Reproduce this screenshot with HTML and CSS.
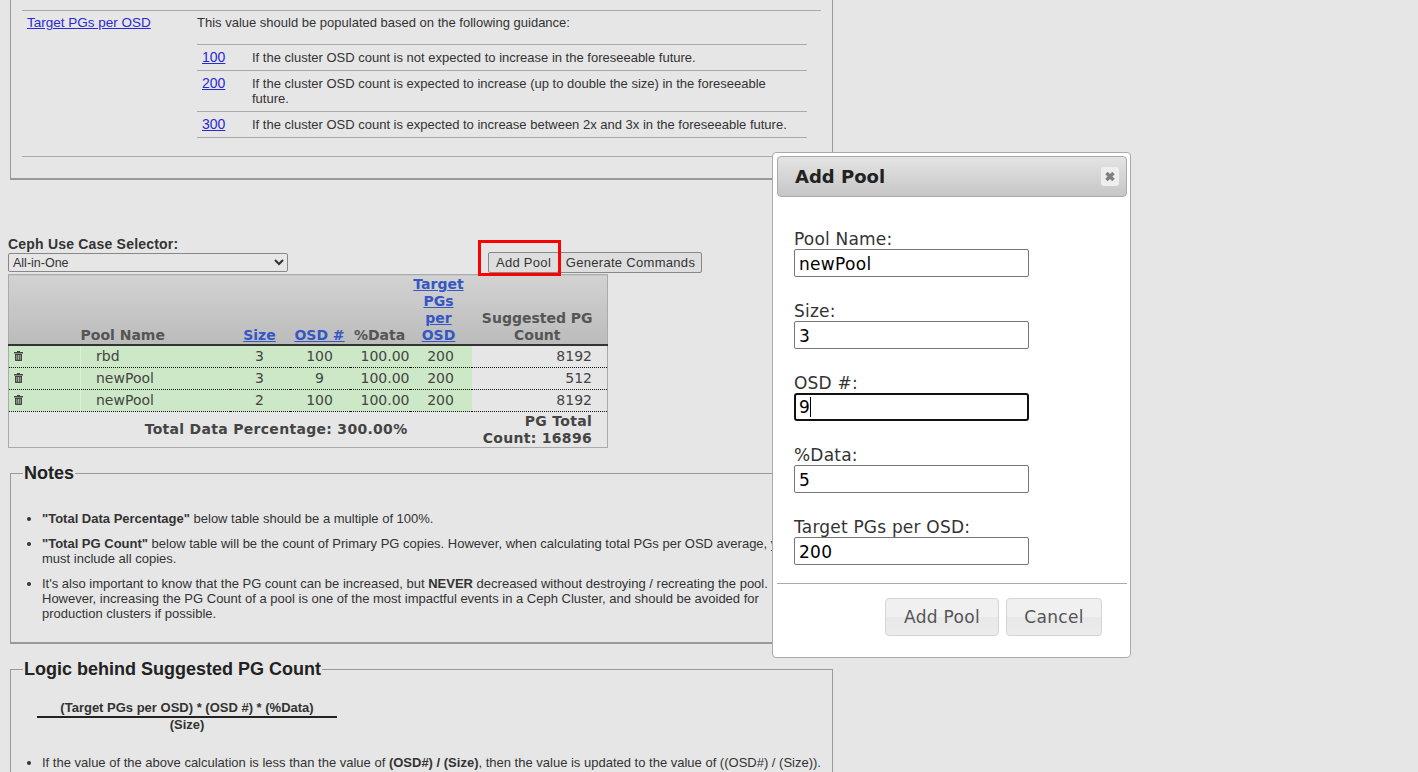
FILE: index.html
```html
<!DOCTYPE html>
<html>
  <head>
    <meta charset="UTF-8" />
    <title>Ceph PGs per Pool Calculator</title>
    <link rel="stylesheet" href="styles.css">
  </head>
  <body>
    <div class="page">
      <fieldset class="box intro">
        <div class="info-row first-row">
          <div class="info-name"><a href="#">%Data</a></div>
          <div class="info-text">This value represents the percentage of data that will be contained in this pool for that specific OSD set. Examples are pre-filled below for guidance.</div>
        </div>
        <div class="info-row">
          <div class="info-name"><a href="#">Target PGs per OSD</a></div>
          <div class="info-text">
            This value should be populated based on the following guidance:
            <div class="guide">
              <div class="guide-row"><a href="#">100</a><span>If the cluster OSD count is not expected to increase in the foreseeable future.</span></div>
              <div class="guide-row"><a href="#">200</a><span>If the cluster OSD count is expected to increase (up to double the size) in the foreseeable future.</span></div>
              <div class="guide-row"><a href="#">300</a><span>If the cluster OSD count is expected to increase between 2x and 3x in the foreseeable future.</span></div>
            </div>
          </div>
        </div>
      </fieldset>

      <div class="selector-label">Ceph Use Case Selector:</div>
      <div class="toolbar">
        <select class="use-case">
          <option>All-in-One</option>
        </select>
        <div class="add-wrap">
          <button class="tool-btn">Add Pool</button>
          <div class="red-mark"></div>
        </div>
        <button class="tool-btn gen-btn">Generate Commands</button>
      </div>

      <table class="pools">
        <colgroup>
          <col class="c-del"><col class="c-name"><col class="c-size"><col class="c-osd"><col class="c-data"><col class="c-target"><col class="c-count">
        </colgroup>
        <thead>
          <tr>
            <th></th>
            <th class="left">Pool Name</th>
            <th><a href="#">Size</a></th>
            <th><a href="#">OSD #</a></th>
            <th>%Data</th>
            <th class="th-target"><a href="#">Target PGs per OSD</a></th>
            <th class="th-count">Suggested PG Count</th>
          </tr>
        </thead>
        <tbody>
          <tr>
            <td class="green"><svg class="trash" viewBox="0 0 9 10"><path d="M3 0h3v1h3v1.4H0V1h3zM1 3h7v6.4l-0.6 0.6H1.6L1 9.4zM2.5 4v4.8h0.7V4zM4.15 4v4.8h0.7V4zM5.8 4v4.8h0.7V4z" fill-rule="evenodd"/></svg></td>
            <td class="green name">rbd</td>
            <td class="green mid">3</td>
            <td class="green mid">100</td>
            <td class="green num">100.00</td>
            <td class="green mid">200</td>
            <td class="num count">8192</td>
          </tr>
          <tr>
            <td class="green"><svg class="trash" viewBox="0 0 9 10"><path d="M3 0h3v1h3v1.4H0V1h3zM1 3h7v6.4l-0.6 0.6H1.6L1 9.4zM2.5 4v4.8h0.7V4zM4.15 4v4.8h0.7V4zM5.8 4v4.8h0.7V4z" fill-rule="evenodd"/></svg></td>
            <td class="green name">newPool</td>
            <td class="green mid">3</td>
            <td class="green mid">9</td>
            <td class="green num">100.00</td>
            <td class="green mid">200</td>
            <td class="num count">512</td>
          </tr>
          <tr>
            <td class="green"><svg class="trash" viewBox="0 0 9 10"><path d="M3 0h3v1h3v1.4H0V1h3zM1 3h7v6.4l-0.6 0.6H1.6L1 9.4zM2.5 4v4.8h0.7V4zM4.15 4v4.8h0.7V4zM5.8 4v4.8h0.7V4z" fill-rule="evenodd"/></svg></td>
            <td class="green name">newPool</td>
            <td class="green mid">2</td>
            <td class="green mid">100</td>
            <td class="green num">100.00</td>
            <td class="green mid">200</td>
            <td class="num count">8192</td>
          </tr>
        </tbody>
        <tfoot>
          <tr>
            <td colspan="6" class="total-data">Total Data Percentage: 300.00%</td>
            <td class="total-count">PG Total Count: 16896</td>
          </tr>
        </tfoot>
      </table>

      <fieldset class="box notes">
        <legend>Notes</legend>
        <ul>
          <li><b>"Total Data Percentage"</b> below table should be a multiple of 100%.</li>
          <li><b>"Total PG Count"</b> below table will be the count of Primary PG copies. However, when calculating total PGs per OSD average, you must include all copies.</li>
          <li>It's also important to know that the PG count can be increased, but <b>NEVER</b> decreased without destroying / recreating the pool. However, increasing the PG Count of a pool is one of the most impactful events in a Ceph Cluster, and should be avoided for production clusters if possible.</li>
        </ul>
      </fieldset>

      <fieldset class="box logic">
        <legend>Logic behind Suggested PG Count</legend>
        <div class="formula">
          <div class="top">(Target PGs per OSD) * (OSD #) * (%Data)</div>
          <div class="bottom">(Size)</div>
        </div>
        <ul>
          <li>If the value of the above calculation is less than the value of <b>(OSD#) / (Size)</b>, then the value is updated to the value of ((OSD#) / (Size)).</li>
        </ul>
      </fieldset>
    </div>

    <div class="dialog">
      <div class="dialog-title">
        <span>Add Pool</span>
        <div class="dialog-close"><svg viewBox="0 0 10 10"><path d="M1.5 1.5L8.5 8.5M8.5 1.5L1.5 8.5"/></svg></div>
      </div>
      <div class="dialog-body">
        <label for="poolName">Pool Name:</label>
        <input type="text" id="poolName" value="newPool"/>
        <label for="poolSize">Size:</label>
        <input type="text" id="poolSize" value="3"/>
        <label>OSD #:</label>
        <div class="fake-focus">9<i class="caret"></i></div>
        <label for="poolData">%Data:</label>
        <input type="text" id="poolData" value="5"/>
        <label for="poolTarget">Target PGs per OSD:</label>
        <input type="text" id="poolTarget" value="200"/>
      </div>
      <div class="dialog-buttons">
        <button class="dlg-btn add">Add Pool</button>
        <button class="dlg-btn cancel">Cancel</button>
      </div>
    </div>
  </body>
</html>
```

FILE: styles.css
```css
* {
  box-sizing: border-box;
}

html, body {
  height: 772px;
  overflow: hidden;
}

body {
  margin: 0;
  background-color: #e6e6e6;
  font-family: "Liberation Sans", Arial, sans-serif;
  font-size: 13px;
  line-height: 15px;
  color: #333;
  position: relative;
}

a {
  color: #2a2ad2;
}

.page {
  width: 850px;
  padding-left: 8px;
  margin-top: -41px;
}

.box {
  margin: 0 0 0 2px;
  width: 823px;
  border: 1px solid #999;
  border-bottom: 2px solid #999;
  padding: 0 11px;
}

.box legend {
  font-size: 18px;
  font-weight: bold;
  line-height: 21px;
  color: #222;
  padding: 0 1px;
  margin-left: 1px;
}

/* intro box */
.intro {
  height: 221px;
}

.info-row {
  display: flex;
  border-top: 1px solid #aaa;
  padding-top: 4px;
}

.first-row {
  border-top: none;
  height: 50px;
  padding-top: 4px;
}

.info-name {
  width: 175px;
  padding-left: 5px;
  font-size: 13.5px;
}

.info-text {
  width: 610px;
}

.guide {
  margin-top: 14px;
  border-top: 1px solid #aaa;
}

.guide-row {
  display: flex;
  border-bottom: 1px solid #aaa;
  padding: 5px 0 5px 5px;
}

.guide-row a {
  width: 50px;
  flex-shrink: 0;
  font-size: 14px;
}

.guide-row span {
  padding-right: 20px;
}

.intro .info-row:last-child {
  border-bottom: 1px solid #aaa;
  height: 147px;
}

/* selector and buttons */
.selector-label {
  margin-top: 57px;
  height: 14px;
  font-size: 14px;
  font-weight: bold;
  letter-spacing: 0.2px;
  color: #333;
}

.toolbar {
  display: flex;
  align-items: flex-start;
  height: 22px;
}

.use-case {
  width: 280px;
  height: 19px;
  margin-top: 2px;
  font-family: "Liberation Sans", sans-serif;
  font-size: 12.5px;
  padding: 0;
  color: #333;
  background: #e6e6e6;
  border: 1px solid #888;
  border-radius: 2px;
}

.add-wrap {
  position: relative;
  margin-left: 200px;
}

.tool-btn {
  display: block;
  height: 21px;
  margin-top: 1px;
  padding: 0;
  font-family: "Liberation Sans", sans-serif;
  font-size: 13px;
  letter-spacing: 0.3px;
  color: #333;
  background: #dedede;
  border: 1px solid #888;
  border-radius: 2px;
}

.add-wrap .tool-btn {
  width: 71px;
}

.gen-btn {
  width: 143px;
}

.red-mark {
  position: absolute;
  left: -10px;
  top: -11px;
  width: 83px;
  height: 36px;
  border: 3px solid #f00;
}

/* pool table */
.pools {
  border-collapse: collapse;
  table-layout: fixed;
  width: 600px;
  margin-top: 1px;
  font-family: "DejaVu Sans", Verdana, sans-serif;
  font-size: 14px;
  color: #444;
  border: 1px solid #aaa;
}

.c-del { width: 72px; }
.c-name { width: 149px; }
.c-size { width: 60px; }
.c-osd { width: 60px; }
.c-data { width: 60px; }
.c-target { width: 62px; }

.pools th {
  background: linear-gradient(#d2d2d2, #bbb);
  line-height: 17px;
  padding: 1px 0 0;
  vertical-align: bottom;
  border-bottom: 2px solid #333;
  font-weight: bold;
  color: #555;
}

.pools th a {
  color: #3557c4;
}

.pools th.left {
  text-align: left;
}

.pools th.th-target {
  padding: 1px 6px 0 2px;
}

.pools th.th-count {
  padding: 1px 14px 0 10px;
}

.pools td {
  height: 22px;
  padding: 0;
  border-bottom: 1px dotted #111;
  line-height: 17px;
}

.pools td.green {
  background-color: #cde8c6;
}

.trash {
  display: block;
  width: 9px;
  height: 10px;
  margin-left: 5px;
  fill: #444;
}

.pools td.name {
  padding-left: 15px;
  border-left: 1px solid #dcefd7;
}

.mid {
  text-align: center;
}

.num {
  text-align: right;
}

.pools td.count {
  padding-right: 15px;
}

.pools tfoot td {
  border-bottom: none;
  font-weight: bold;
  height: 36px;
  text-align: right;
  letter-spacing: 0.3px;
}

.pools td.total-data {
  padding-right: 64px;
}

.pools td.total-count {
  padding: 1px 15px 0 6px;
}

/* notes */
.notes {
  margin-top: 15px;
  height: 181px;
}

.box ul {
  margin: 0;
  padding-left: 20px;
}

.box li {
  margin-bottom: 10px;
}

.notes ul {
  margin-top: 27px;
}

.logic {
  margin-top: 15px;
  height: 200px;
}

.formula {
  width: 300px;
  margin: 20px 0 24px 15px;
  text-align: center;
  font-weight: bold;
}

.formula .top {
  border-bottom: 2px solid #222;
  line-height: 16px;
}

.formula .bottom {
  line-height: 13px;
}

/* dialog */
.dialog {
  position: absolute;
  left: 772px;
  top: 152px;
  width: 359px;
  height: 506px;
  background-color: #fff;
  border: 1px solid #aaa;
  border-radius: 4px;
  padding: 3px 3px 0 4px;
  font-family: "DejaVu Sans", Verdana, sans-serif;
  font-size: 17px;
  letter-spacing: 0.2px;
  line-height: 20px;
  color: #333;
}

.dialog-title {
  display: flex;
  align-items: center;
  justify-content: space-between;
  height: 41px;
  padding: 0 7px 0 17px;
  background: linear-gradient(#e4e4e4, #c6c6c6);
  border: 1px solid #aaa;
  border-radius: 4px;
  font-size: 18px;
  letter-spacing: 0;
  font-weight: bold;
  color: #222;
}

.dialog-close {
  width: 18px;
  height: 19px;
  background-color: #eee;
  border-radius: 3px;
  padding: 4px;
}

.dialog-close svg {
  display: block;
  width: 10px;
  height: 11px;
}

.dialog-close path {
  stroke: #808080;
  stroke-width: 3.5;
  fill: none;
}

.dialog-body {
  padding: 33px 0 0 17px;
  height: 387px;
  border-bottom: 1px solid #aaa;
}

.dialog-body label {
  display: block;
  height: 20px;
  margin-top: -1px;
}

.dialog-body input, .fake-focus {
  display: block;
  width: 235px;
  height: 28px;
  margin-bottom: 25px;
  padding: 1px 4px 0;
  font-family: "DejaVu Sans", Verdana, sans-serif;
  font-size: 17px;
  letter-spacing: 0.3px;
  line-height: 24px;
  color: #000;
  background: #fff;
  border: 1px solid #767676;
  border-radius: 2px;
}

.fake-focus {
  border: 2px solid #111;
  border-radius: 3px;
  padding: 0 3px;
}

.caret {
  display: inline-block;
  width: 1px;
  height: 20px;
  background-color: #000;
  vertical-align: -4px;
}

.dialog-buttons {
  display: flex;
  justify-content: flex-end;
  gap: 7px;
  padding: 14px 25px 0 0;
}

.dlg-btn {
  height: 38px;
  font-family: "DejaVu Sans", Verdana, sans-serif;
  font-size: 17px;
  letter-spacing: 0.3px;
  color: #555;
  background: linear-gradient(#f0f0f0 50%, #e8e8e8 50%, #ececec);
  border: 1px solid #d4d4d4;
  border-radius: 4px;
  padding: 0;
}

.dlg-btn.add {
  width: 114px;
}

.dlg-btn.cancel {
  width: 96px;
}
```
